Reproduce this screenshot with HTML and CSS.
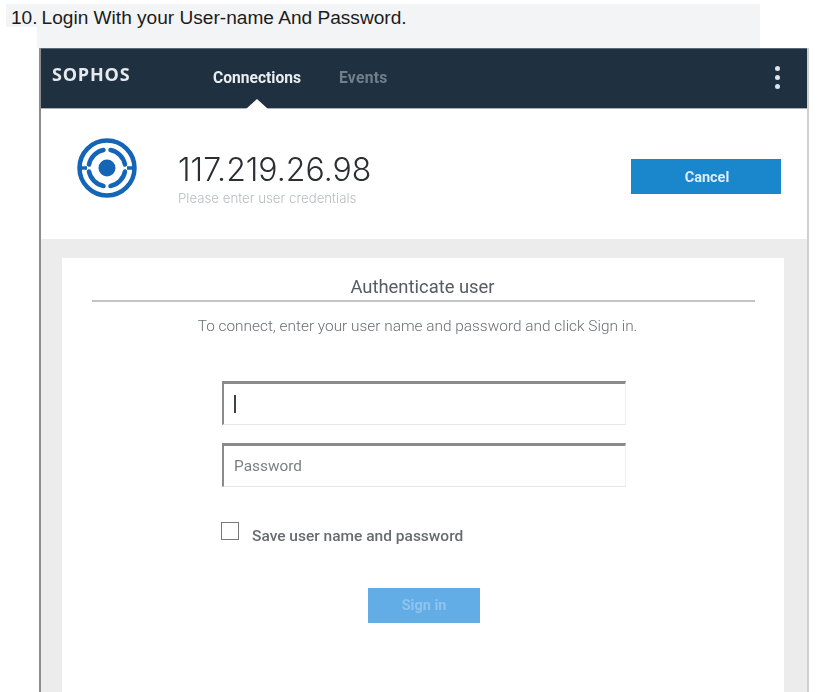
FILE: index.html
```html
<!DOCTYPE html>
<html lang="en">
<head>
<meta charset="utf-8">
<title>Login With your User-name And Password</title>
<link rel="stylesheet" href="styles.css">
</head>
<body>
<div class="doc-title"><span class="num">10.</span><span>Login With your User-name And Password.</span></div>
<div class="doc-gap"></div>
<main class="window">
  <header class="topbar">
    <div class="logo">SOPHOS</div>
    <nav class="tabs">
      <a class="tab active">Connections</a>
      <a class="tab">Events</a>
    </nav>
    <div class="kebab"><i></i><i></i><i></i></div>
  </header>
  <section class="summary">
    <svg class="conn-icon" width="62" height="62" viewBox="0 0 62 62" aria-hidden="true">
      <circle cx="31" cy="31" r="27.5" fill="none" stroke="#1565b7" stroke-width="4.5"/>
      <path d="M3 31H11M51 31H59" stroke="#1565b7" stroke-width="3.5" fill="none"/>
      <path d="M27.5 13A18.5 18.5 0 0 0 13 27.5M34.5 13A18.5 18.5 0 0 1 49 27.5M13 34.5A18.5 18.5 0 0 0 27.5 49M49 34.5A18.5 18.5 0 0 1 34.5 49" stroke="#1565b7" stroke-width="4.5" fill="none" stroke-linecap="round"/>
      <circle cx="31" cy="31" r="8.5" fill="#1565b7"/>
    </svg>
    <div class="conn-text">
      <div class="ip">117.219.26.98</div>
      <div class="hint">Please enter user credentials</div>
    </div>
    <button class="btn cancel" type="button">Cancel</button>
  </section>
  <section class="content">
    <div class="card">
      <h1 class="card-title">Authenticate user</h1>
      <p class="lead">To connect, enter your user name and password and click Sign in.</p>
      <div class="form">
        <div class="field"><span class="caret"></span></div>
        <div class="field"><span class="placeholder">Password</span></div>
        <label class="save"><span class="box"></span><span>Save user name and password</span></label>
        <button class="btn signin" type="button">Sign in</button>
      </div>
    </div>
  </section>
</main>
</body>
</html>
```
FILE: styles.css
```css
* { box-sizing: border-box; }
html, body { margin: 0; height: 692px; overflow: hidden; background: #fff; }
body { padding-top: 4px; font-family: "Inter", "Liberation Sans", sans-serif; }

.doc-title {
  display: flex;
  gap: 4px;
  margin-left: 6px;
  padding-left: 5px;
  width: 754px;
  height: 23px;
  background: #f3f4f6;
  font: 19.1px/27px "Liberation Sans", Arial, sans-serif;
  color: #1b1b1b;
}
.doc-gap { margin-left: 37px; width: 723px; height: 21px; background: #f3f4f6; }

.window {
  margin-left: 39px;
  width: 770px;
  height: 644px;
  background: #ececec;
  border-left: 2px solid #8c8c8c;
  border-right: 2px solid #cfcfcf;
  filter: blur(0.4px);
}
.topbar {
  position: relative;
  display: flex;
  align-items: center;
  height: 61px;
  background: #1f3140;
  border-top: 1px solid #5a6a75;
  border-bottom: 1px solid #a9b1b6;
  padding-left: 11px;
}
.logo {
  width: 161px;
  margin-top: -9px;
  font: 700 18px/20px "Open Sans", sans-serif;
  letter-spacing: 0.8px;
  color: #e6eaed;
}
.tabs { display: flex; gap: 38px; margin-top: -2px; }
.tab {
  position: relative;
  font: 700 15.6px/20px "Roboto", sans-serif;
  color: #6f7f8b;
}
.tab + .tab { letter-spacing: 0.3px; }
.tab.active { color: #e8edf0; }
.tab.active::after {
  content: "";
  position: absolute;
  left: 50%;
  bottom: -21px;
  margin-left: -11px;
  border-left: 11px solid transparent;
  border-right: 11px solid transparent;
  border-bottom: 10px solid #fff;
}
.kebab {
  display: flex;
  flex-direction: column;
  gap: 4px;
  margin-left: auto;
  margin-right: 27px;
  margin-top: -2px;
}
.kebab i { width: 5px; height: 5px; border-radius: 50%; background: #dfe5e9; }

.summary {
  display: flex;
  align-items: center;
  height: 130px;
  background: #fff;
  padding: 0 26px 0 35px;
}
.conn-icon { flex: none; margin-top: -12px; }
.conn-text { margin-left: 40px; margin-top: 10px; }
.ip {
  font: 300 32px/36px "Inter", sans-serif;
  color: #2b2f33;
}
.hint {
  margin-top: 2px;
  font: 300 13.25px/16px "Inter", sans-serif;
  color: #b9bdc1;
}
.btn {
  display: block;
  border: 0;
  padding: 3px 0 0;
  font: 700 14.5px/16px "Roboto", sans-serif;
  color: #dcecf8;
}
.cancel {
  margin-left: auto;
  margin-top: 4px;
  padding-left: 2px;
  width: 150px;
  height: 35px;
  background: #1a86cc;
}

.content { padding: 19px 23px 0 21px; height: 453px; }
.card { height: 434px; background: #fff; padding: 18px 29px 0 30px; }
.card-title {
  margin: 0;
  height: 26px;
  padding-right: 2px;
  border-bottom: 2px solid #c4c4c4;
  text-align: center;
  font: 400 18.4px/22px "Roboto", sans-serif;
  color: #555c63;
}
.lead {
  margin: 14px 0 0;
  padding-right: 12px;
  text-align: center;
  font: 300 15.4px/20px "Roboto", sans-serif;
  color: #6a6e72;
}
.form { margin-left: 129px; padding-top: 45px; }
.field {
  display: flex;
  align-items: center;
  width: 404px;
  height: 44px;
  margin-bottom: 18px;
  margin-left: 1px;
  padding-left: 10px;
  background: #fff;
  border-top: 3px solid #8a8a8a;
  border-left: 2px solid #8a8a8a;
  border-right: 1px solid #efefef;
  border-bottom: 1px solid #e8e8e8;
}
.caret { width: 2px; height: 18px; background: #3c4248; }
.placeholder { font: 400 15.4px/20px "Roboto", sans-serif; color: #7b7f83; }
.save {
  display: flex;
  align-items: center;
  gap: 13px;
  margin-top: 39px;
  font: 500 15.5px/20px "Roboto", sans-serif;
  color: #666c72;
}
.box {
  width: 18px;
  height: 18px;
  margin-top: -11px;
  border: 1.5px solid #777;
}
.signin {
  margin: 42px 0 0 147px;
  padding-top: 0;
  width: 112px;
  height: 35px;
  background: #62ade6;
  color: #8fc4ee;
}
```
